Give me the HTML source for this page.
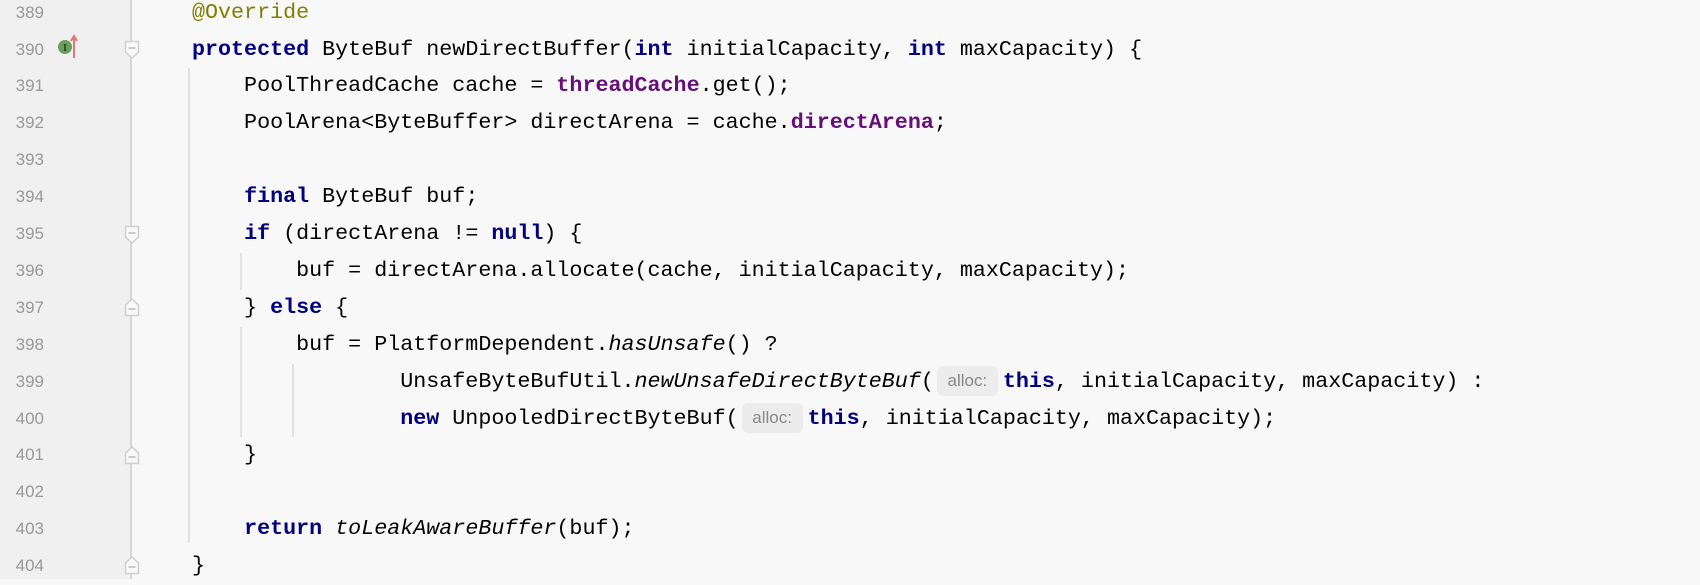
<!DOCTYPE html>
<html><head><meta charset="utf-8"><style>
html,body{margin:0;padding:0}
body{width:1700px;height:579px;background:#f8f8f8;position:relative;overflow:hidden;font-family:"Liberation Mono",monospace;}
.gut{position:absolute;left:0;top:0;width:131px;height:579px;background:#f0f0f0}
.gl{position:absolute;left:130px;top:0;width:2px;height:579px;background:#d6d6d6}
.num{position:absolute;left:0;width:44px;text-align:right;font-family:"Liberation Sans",sans-serif;font-size:17px;color:#999;height:36.9px;line-height:36.9px}
.ln{position:absolute;left:192px;white-space:pre;font-size:21.7px;height:36.9px;line-height:36.9px;color:#000}
.k{color:#000080;font-weight:bold}
.f{color:#660e7a;font-weight:bold}
.a{color:#808000}
.i{font-style:italic}
.h{display:inline-block;font-family:"Liberation Sans",sans-serif;font-size:17px;color:#888;background:#ececec;border-radius:6px;height:30px;line-height:30px;width:61px;text-align:center;margin:0 5px 0 3px;vertical-align:1px;font-style:normal;font-weight:normal}
.g{position:absolute;width:2px;background:#e2e2e2}
.fm{position:absolute;left:124px}
</style></head><body>
<div class="gut"></div><div class="gl"></div>

<div class="num" style="top:-5.4px">389</div>
<div class="num" style="top:31.5px">390</div>
<div class="num" style="top:68.4px">391</div>
<div class="num" style="top:105.3px">392</div>
<div class="num" style="top:142.2px">393</div>
<div class="num" style="top:179.1px">394</div>
<div class="num" style="top:216px">395</div>
<div class="num" style="top:252.9px">396</div>
<div class="num" style="top:289.8px">397</div>
<div class="num" style="top:326.7px">398</div>
<div class="num" style="top:363.6px">399</div>
<div class="num" style="top:400.5px">400</div>
<div class="num" style="top:437.4px">401</div>
<div class="num" style="top:474.3px">402</div>
<div class="num" style="top:511.2px">403</div>
<div class="num" style="top:548.1px">404</div>

<svg style="position:absolute;left:55px;top:34px" width="26" height="26" viewBox="0 0 26 26">
<circle cx="10" cy="13" r="7" fill="#6a9e5b"/>
<text x="10" y="17" font-family="Liberation Serif,serif" font-size="10" font-weight="bold" text-anchor="middle" fill="#2b3b26">I</text>
<path d="M19 24V3M16 7L19 2L22 7" stroke="#e0787a" stroke-width="2" fill="none"/>
</svg>

<svg class="fm" style="top:40px" width="16" height="20" viewBox="0 0 16 20"><path d="M1.5 1.5H14.5V12L8 18L1.5 12Z" fill="#f8f8f8" stroke="#cfcfcf" stroke-width="1.5"/><path d="M4.5 8H11.5" stroke="#bbb" stroke-width="1.5"/></svg>
<svg class="fm" style="top:225px" width="16" height="20" viewBox="0 0 16 20"><path d="M1.5 1.5H14.5V12L8 18L1.5 12Z" fill="#f8f8f8" stroke="#cfcfcf" stroke-width="1.5"/><path d="M4.5 8H11.5" stroke="#bbb" stroke-width="1.5"/></svg>
<svg class="fm" style="top:297px" width="16" height="20" viewBox="0 0 16 20"><path d="M1.5 18.5H14.5V8L8 2L1.5 8Z" fill="#f8f8f8" stroke="#cfcfcf" stroke-width="1.5"/><path d="M4.5 12H11.5" stroke="#bbb" stroke-width="1.5"/></svg>
<svg class="fm" style="top:445px" width="16" height="20" viewBox="0 0 16 20"><path d="M1.5 18.5H14.5V8L8 2L1.5 8Z" fill="#f8f8f8" stroke="#cfcfcf" stroke-width="1.5"/><path d="M4.5 12H11.5" stroke="#bbb" stroke-width="1.5"/></svg>
<svg class="fm" style="top:555px" width="16" height="20" viewBox="0 0 16 20"><path d="M1.5 18.5H14.5V8L8 2L1.5 8Z" fill="#f8f8f8" stroke="#cfcfcf" stroke-width="1.5"/><path d="M4.5 12H11.5" stroke="#bbb" stroke-width="1.5"/></svg>

<div class="g" style="left:188px;top:68px;height:475px"></div>
<div class="g" style="left:240px;top:253px;height:37px"></div>
<div class="g" style="left:240px;top:327px;height:110px"></div>
<div class="g" style="left:292px;top:364px;height:73px"></div>

<div class="ln" style="top:-5.4px"><span class="a">@Override</span></div>
<div class="ln" style="top:31.5px"><span class="k">protected</span> ByteBuf newDirectBuffer(<span class="k">int</span> initialCapacity, <span class="k">int</span> maxCapacity) {</div>
<div class="ln" style="top:68.4px">    PoolThreadCache cache = <span class="f">threadCache</span>.get();</div>
<div class="ln" style="top:105.3px">    PoolArena&lt;ByteBuffer&gt; directArena = cache.<span class="f">directArena</span>;</div>
<div class="ln" style="top:179.1px">    <span class="k">final</span> ByteBuf buf;</div>
<div class="ln" style="top:216px">    <span class="k">if</span> (directArena != <span class="k">null</span>) {</div>
<div class="ln" style="top:252.9px">        buf = directArena.allocate(cache, initialCapacity, maxCapacity);</div>
<div class="ln" style="top:289.8px">    } <span class="k">else</span> {</div>
<div class="ln" style="top:326.7px">        buf = PlatformDependent.<span class="i">hasUnsafe</span>() ?</div>
<div class="ln" style="top:363.6px">                UnsafeByteBufUtil.<span class="i">newUnsafeDirectByteBuf</span>(<span class="h">alloc:</span><span class="k">this</span>, initialCapacity, maxCapacity) :</div>
<div class="ln" style="top:400.5px">                <span class="k">new</span> UnpooledDirectByteBuf(<span class="h">alloc:</span><span class="k">this</span>, initialCapacity, maxCapacity);</div>
<div class="ln" style="top:437.4px">    }</div>
<div class="ln" style="top:511.2px">    <span class="k">return</span> <span class="i">toLeakAwareBuffer</span>(buf);</div>
<div class="ln" style="top:548.1px">}</div>
</body></html>
